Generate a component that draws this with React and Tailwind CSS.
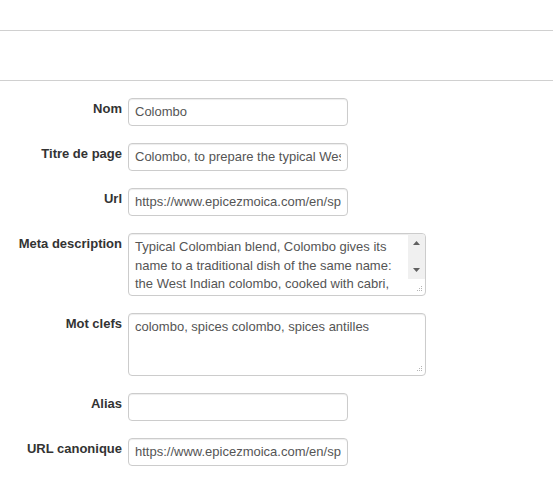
const font = { fontFamily: '"Liberation Sans", Arial, sans-serif' };

const inputCls =
  'h-[28px] w-[220px] rounded-[4px] border border-[#cccccc] bg-white px-[6px] text-[13px] leading-[26px] text-[#555555] shadow-[inset_0_1px_1px_rgba(0,0,0,0.075)]';

const Grip = () => (
  <svg width="8" height="8" viewBox="0 0 8 8" className="absolute right-[2px] bottom-[2px]">
    <rect x="6" y="1" width="1" height="1" fill="#b5b5b5" />
    <rect x="4" y="3" width="1" height="1" fill="#b5b5b5" />
    <rect x="6" y="3" width="1" height="1" fill="#b5b5b5" />
    <rect x="2" y="5" width="1" height="1" fill="#b5b5b5" />
    <rect x="4" y="5" width="1" height="1" fill="#b5b5b5" />
    <rect x="6" y="5" width="1" height="1" fill="#b5b5b5" />
  </svg>
);

const Row = ({ label, children }) => (
  <div className="flex items-start">
    <div className="w-[122px] pt-[2px] text-right text-[13px] font-bold leading-[18px] text-[#333333]">
      {label}
    </div>
    <div className="ml-[6px]">{children}</div>
  </div>
);

// the value is clipped at the padding edge, like a real input
const TextInput = ({ value }) => (
  <div className={inputCls}>
    <div className="h-full overflow-hidden whitespace-nowrap">{value}</div>
  </div>
);

const TextArea = ({ value, scroll }) => (
  <div className="relative flex h-[63px] w-[298px] overflow-hidden rounded-[4px] border border-[#cccccc] bg-white shadow-[inset_0_1px_1px_rgba(0,0,0,0.075)]">
    <div className="flex-1 overflow-hidden px-[6px] pt-[4px] text-[13px] leading-[18.5px] text-[#555555]">
      {value}
    </div>
    {scroll && (
      <div className="flex h-[45px] w-[17px] flex-col items-center justify-between bg-[#f0f0f0] py-[7px]">
        <svg width="7" height="4" viewBox="0 0 7 4">
          <path d="M3.5 0L7 4H0Z" fill="#606060" />
        </svg>
        <svg width="7" height="4" viewBox="0 0 7 4">
          <path d="M0 0H7L3.5 4Z" fill="#606060" />
        </svg>
      </div>
    )}
    <Grip />
  </div>
);

export default function App() {
  return (
    <div className="min-h-[494px] w-full bg-white" style={font}>
      <div className="h-[30px]" />
      <div className="h-[50px] border-t border-[#d0d0d0]" />
      <div className="flex flex-col gap-[17px] border-t border-[#d0d0d0] pt-[17px]">
        <Row label="Nom">
          <TextInput value="Colombo" />
        </Row>
        <Row label="Titre de page">
          <TextInput value="Colombo, to prepare the typical West Indian colombo" />
        </Row>
        <Row label="Url">
          <TextInput value="https://www.epicezmoica.com/en/spices/colombo" />
        </Row>
        <Row label="Meta description">
          <TextArea
            scroll
            value="Typical Colombian blend, Colombo gives its name to a traditional dish of the same name: the West Indian colombo, cooked with cabri, chicken or fish."
          />
        </Row>
        <Row label="Mot clefs">
          <TextArea value="colombo, spices colombo, spices antilles" />
        </Row>
        <Row label="Alias">
          <TextInput value="" />
        </Row>
        <Row label="URL canonique">
          <TextInput value="https://www.epicezmoica.com/en/spices/colombo" />
        </Row>
      </div>
    </div>
  );
}
